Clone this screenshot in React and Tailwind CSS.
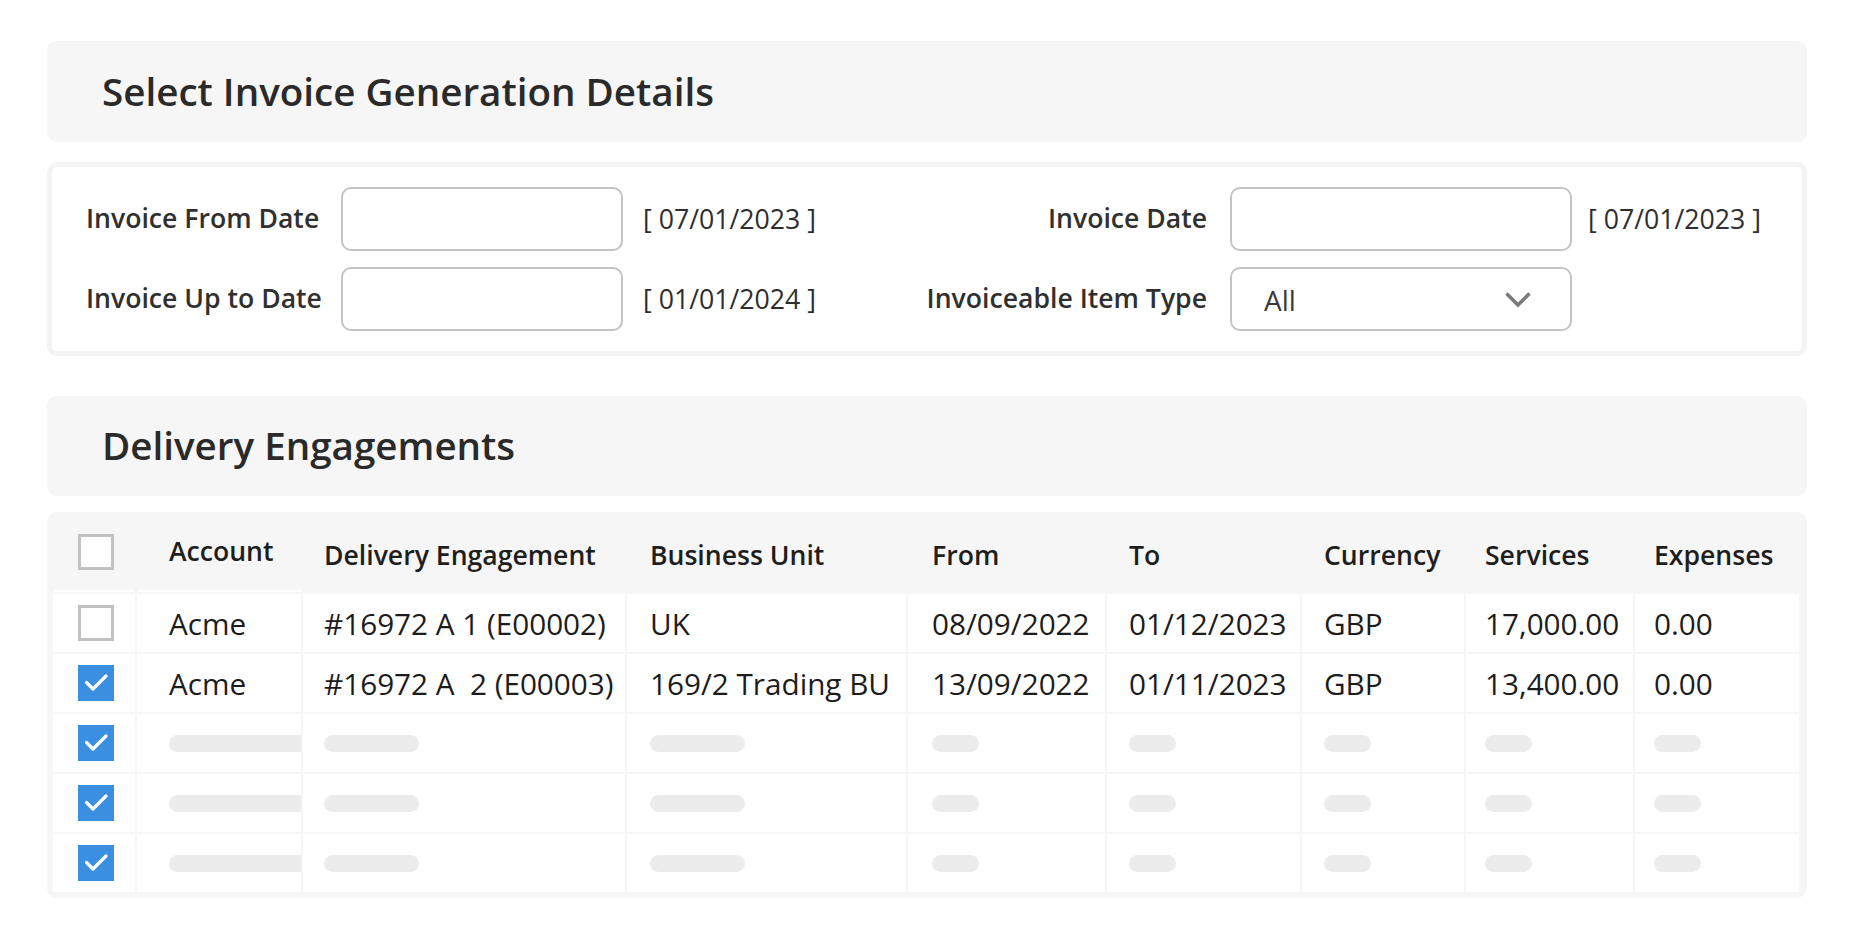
import { useState } from "react";

const cols =
  "grid grid-cols-[82px_164px_322px_279px_197px_193px_162px_167px_164px] gap-x-[2px]";

const rows = [
  {
    checked: false,
    account: "Acme",
    engagement: "#16972 A 1 (E00002)",
    unit: "UK",
    from: "08/09/2022",
    to: "01/12/2023",
    currency: "GBP",
    services: "17,000.00",
    expenses: "0.00",
  },
  {
    checked: true,
    account: "Acme",
    engagement: "#16972 A\u00a0 2 (E00003)",
    unit: "169/2 Trading BU",
    from: "13/09/2022",
    to: "01/11/2023",
    currency: "GBP",
    services: "13,400.00",
    expenses: "0.00",
  },
  { checked: true, skeleton: true },
  { checked: true, skeleton: true },
  { checked: true, skeleton: true },
];

function Checkbox({ checked, onClick }) {
  if (checked) {
    return (
      <button
        onClick={onClick}
        className="w-[36px] h-[36px] bg-[#3b8fe1] flex items-center justify-center"
      >
        <svg width="36" height="36" viewBox="0 0 36 36">
          <polyline
            points="8.5,17.5 15,24 28,11"
            fill="none"
            stroke="#fff"
            strokeWidth="3.2"
            strokeLinecap="round"
            strokeLinejoin="round"
          />
        </svg>
      </button>
    );
  }
  return (
    <button
      onClick={onClick}
      className="w-[36px] h-[36px] bg-white border-[3px] border-[#c2c2c2]"
    />
  );
}

function Pill({ w }) {
  return <div className={`h-[17px] rounded-full bg-[#ececec] ${w}`} />;
}

function Field({ value, select }) {
  return (
    <div className="h-[64px] rounded-[10px] border-2 border-[#c4c4c4] bg-white flex items-center pl-[32px] pr-[38px]">
      {select && (
        <>
          <span className="flex-1 text-[28px] text-[#3a3a3a] pt-[2px]">{value}</span>
          <svg width="28" height="17" viewBox="0 0 28 17">
            <polyline
              points="2.5,2.5 14,14 25.5,2.5"
              fill="none"
              stroke="#7a7a7a"
              strokeWidth="3.6"
            />
          </svg>
        </>
      )}
    </div>
  );
}

export default function App() {
  const [data, setData] = useState(rows);
  const allChecked = data.every((r) => r.checked);

  const toggle = (i) =>
    setData(data.map((r, idx) => (idx === i ? { ...r, checked: !r.checked } : r)));

  return (
    <div
      className="bg-white min-h-screen pl-[47px] pr-[47px] pt-[41px] text-[#262626]"
      style={{ fontFamily: "'Open Sans', 'Noto Sans', sans-serif" }}
    >
      {/* invoice details header */}
      <div className="h-[101px] rounded-[10px] bg-[#f6f6f6] flex items-center pl-[55px]">
        <h1 className="text-[38.6px] font-semibold text-[#2a2a2a]">
          Select Invoice Generation Details
        </h1>
      </div>

      {/* form */}
      <div className="mt-[20px] rounded-[10px] border-[5px] border-[#f4f4f4] pl-[34px] pr-[34px] py-[20px]">
        <div className="grid grid-cols-[255px_282px_177px_1fr_342px_196px] gap-y-[16px] items-center">
          <div className="text-[26.6px] font-semibold text-[#303030] whitespace-nowrap">Invoice From Date</div>
          <Field />
          <div className="pl-[20px] text-[26.7px] text-[#2e2e2e] whitespace-nowrap">[ 07/01/2023 ]</div>
          <div className="pr-[23px] text-right text-[26.6px] font-semibold text-[#303030]">Invoice Date</div>
          <Field />
          <div className="pl-[16px] text-[26.7px] text-[#2e2e2e] whitespace-nowrap">[ 07/01/2023 ]</div>

          <div className="text-[26.6px] font-semibold text-[#303030] whitespace-nowrap">Invoice Up to Date</div>
          <Field />
          <div className="pl-[20px] text-[26.7px] text-[#2e2e2e] whitespace-nowrap">[ 01/01/2024 ]</div>
          <div className="pr-[23px] text-right text-[26.6px] font-semibold text-[#303030] whitespace-nowrap">
            Invoiceable Item Type
          </div>
          <Field select value="All" />
          <div />
        </div>
      </div>

      {/* engagements header */}
      <div className="mt-[40px] h-[100px] rounded-[10px] bg-[#f6f6f6] flex items-center pl-[55px]">
        <h2 className="text-[38.6px] font-semibold text-[#2a2a2a]">Delivery Engagements</h2>
      </div>

      {/* table */}
      <div className="mt-[16px] rounded-[10px] bg-[#f6f6f6] px-[6px] pb-[6px]">
        <div className={`${cols} h-[80px] text-[26.6px] font-semibold text-[#1e1e1e] whitespace-nowrap`}>
          <div className="flex items-center pl-[25px] pt-[2px] border-b-2 border-white">
            <Checkbox
              checked={allChecked}
              onClick={() => setData(data.map((r) => ({ ...r, checked: !allChecked })))}
            />
          </div>
          <div className="flex items-center pl-[32px] pt-[2px] border-b-2 border-white">Account</div>
          <div className="flex items-center pl-[21px] pt-[7px]">Delivery Engagement</div>
          <div className="flex items-center pl-[23px] pt-[7px]">Business Unit</div>
          <div className="flex items-center pl-[24px] pt-[7px]">From</div>
          <div className="flex items-center pl-[22px] pt-[7px]">To</div>
          <div className="flex items-center pl-[22px] pt-[7px]">Currency</div>
          <div className="flex items-center pl-[19px] pt-[7px]">Services</div>
          <div className="flex items-center pl-[19px] pt-[7px]">Expenses</div>
        </div>

        <div className="flex flex-col gap-y-[2px] mt-[2px]">
          {data.map((r, i) => (
            <div key={i} className={`${cols} h-[58px] text-[29.7px] text-[#1c1c1c] whitespace-nowrap`}>
              <div className="bg-white flex items-center pl-[25px]">
                <Checkbox checked={r.checked} onClick={() => toggle(i)} />
              </div>
              {r.skeleton ? (
                <>
                  <div className="bg-white flex items-center pl-[32px] overflow-hidden">
                    <div className="h-[17px] w-[200px] shrink-0 rounded-full bg-[#ececec]" />
                  </div>
                  <div className="bg-white flex items-center pl-[21px]"><Pill w="w-[95px]" /></div>
                  <div className="bg-white flex items-center pl-[23px]"><Pill w="w-[95px]" /></div>
                  <div className="bg-white flex items-center pl-[24px]"><Pill w="w-[47px]" /></div>
                  <div className="bg-white flex items-center pl-[22px]"><Pill w="w-[47px]" /></div>
                  <div className="bg-white flex items-center pl-[22px]"><Pill w="w-[47px]" /></div>
                  <div className="bg-white flex items-center pl-[19px]"><Pill w="w-[47px]" /></div>
                  <div className="bg-white flex items-center pl-[19px]"><Pill w="w-[47px]" /></div>
                </>
              ) : (
                <>
                  <div className="bg-white flex items-center pl-[32px] pt-[3px]">{r.account}</div>
                  <div className="bg-white flex items-center pl-[21px] pt-[3px]">{r.engagement}</div>
                  <div className="bg-white flex items-center pl-[23px] pt-[3px]">{r.unit}</div>
                  <div className="bg-white flex items-center pl-[24px] pt-[3px]">{r.from}</div>
                  <div className="bg-white flex items-center pl-[22px] pt-[3px]">{r.to}</div>
                  <div className="bg-white flex items-center pl-[22px] pt-[3px]">{r.currency}</div>
                  <div className="bg-white flex items-center pl-[19px] pt-[3px]">{r.services}</div>
                  <div className="bg-white flex items-center pl-[19px] pt-[3px]">{r.expenses}</div>
                </>
              )}
            </div>
          ))}
        </div>
      </div>
    </div>
  );
}
